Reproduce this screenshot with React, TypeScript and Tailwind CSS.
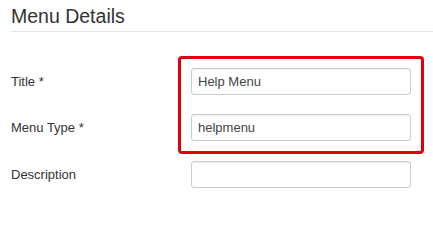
export default function App() {
  const rows = [
    { label: "Title *", value: "Help Menu" },
    { label: "Menu Type *", value: "helpmenu" },
    { label: "Description", value: "" },
  ];

  return (
    <div className="relative h-[203px] w-[433px] overflow-hidden bg-white font-['Liberation_Sans',Arial,sans-serif] text-[#333]">
      <div className="ml-[11px] border-b border-[#e5e5e5] pt-[4px] pb-[3px]">
        <h2 className="text-[19.5px] leading-[24px] font-normal">Menu Details</h2>
      </div>

      <div className="flex flex-col gap-[19px] pt-[36px] pl-[11px]">
        {rows.map((r, i) => (
          <div key={r.label} className={`flex items-center ${i === 2 ? "mt-px" : ""}`}>
            <label className="w-[180px] text-[13px] leading-[16px]">{r.label}</label>
            <input
              readOnly
              value={r.value}
              className="h-[27px] w-[220px] rounded-[3px] border border-[#cccccc] bg-white px-[6px] text-[13px] text-[#444] shadow-[inset_0_1px_1px_rgba(0,0,0,0.06)] outline-none"
            />
          </div>
        ))}
      </div>

      <div className="pointer-events-none absolute top-[56px] left-[178px] h-[98px] w-[246px] rounded-[4px] border-[3px] border-[#e10010]" />
    </div>
  );
}
